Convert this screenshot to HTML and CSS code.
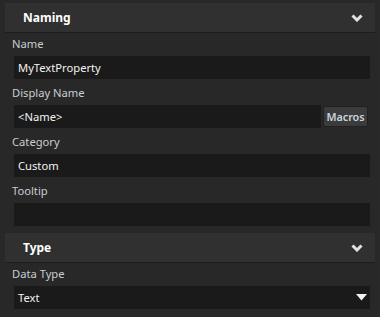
FILE: index.html
```html
<!DOCTYPE html>
<html lang="en">
<head>
    <meta charset="UTF-8">
    <meta name="viewport" content="width=device-width, initial-scale=1.0">
    <title>Property Editor</title>
    <link rel="stylesheet" href="styles.css">
</head>
<body>
    <div class="panel">
        <div class="section">
            <div class="section-header">
                <span>Naming</span>
                <svg class="chevron" width="12" height="8" viewBox="0 0 12 8"><polyline points="1.5,1.5 6,6 10.5,1.5" fill="none" stroke="#e2e2e2" stroke-width="3"/></svg>
            </div>
            <div class="section-body">
                <div class="field">
                    <label>Name</label>
                    <div class="input">MyTextProperty</div>
                </div>
                <div class="field">
                    <label>Display Name</label>
                    <div class="input-row">
                        <div class="input">&lt;Name&gt;</div>
                        <button class="macros">Macros</button>
                    </div>
                </div>
                <div class="field">
                    <label>Category</label>
                    <div class="input">Custom</div>
                </div>
                <div class="field">
                    <label>Tooltip</label>
                    <div class="input"></div>
                </div>
            </div>
        </div>
        <div class="section">
            <div class="section-header">
                <span>Type</span>
                <svg class="chevron" width="12" height="8" viewBox="0 0 12 8"><polyline points="1.5,1.5 6,6 10.5,1.5" fill="none" stroke="#e2e2e2" stroke-width="3"/></svg>
            </div>
            <div class="section-body">
                <div class="field">
                    <label>Data Type</label>
                    <div class="input select">
                        <span>Text</span>
                        <svg width="11" height="7" viewBox="0 0 11 7"><polygon points="0,0 11,0 5.5,6.5" fill="#f2f2f2"/></svg>
                    </div>
                </div>
            </div>
        </div>
    </div>
</body>
</html>
```

FILE: styles.css
```css
body {
    margin: 0;
    background-color: #282828;
    font-family: "Segoe UI", "Noto Sans", sans-serif;
    font-size: 11.2px;
    color: #c9cdd2;
}
.panel {
    padding: 3px 5px 0 5px;
}
.section-header {
    height: 29px;
    border-bottom: 1px solid #1d1d1d;
    background-color: #303030;
    display: flex;
    align-items: center;
    justify-content: space-between;
    padding: 0 12px 0 18px;
    font-size: 12px;
    font-weight: bold;
    color: #ffffff;
}
.section-header .chevron {
    margin-top: 1px;
}
.section-body {
    display: flex;
    flex-direction: column;
    gap: 6px;
    padding: 3px 0 7px 7px;
}
.field label {
    display: block;
    height: 16px;
    line-height: 16px;
    margin-bottom: 4px;
}
.input {
    height: 23px;
    line-height: 23px;
    margin: 0 0 0 2px;
    width: 356px;
    padding: 0 4px;
    box-sizing: border-box;
    background-color: #1a1a1a;
    color: #f2f2f2;
}
.input-row {
    display: flex;
    align-items: center;
    width: 358px;
}
.input-row .input {
    flex: 1;
    width: auto;
}
.macros {
    width: 45px;
    height: 21px;
    margin: 0 2px 0 2px;
    padding: 0;
    border: 1px solid #202020;
    border-radius: 2px;
    background-color: #3b3b3b;
    color: #c9d3de;
    font-family: inherit;
    font-size: 10.8px;
    font-weight: 600;
}
.select {
    display: flex;
    align-items: center;
    justify-content: space-between;
    padding-right: 3px;
}
```
